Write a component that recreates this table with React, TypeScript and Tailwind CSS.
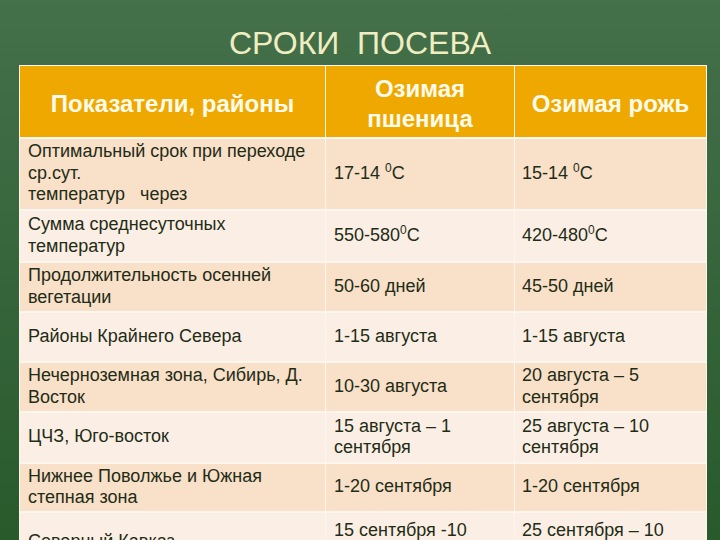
import React from 'react';

type Row = {
  label: React.ReactNode;
  wheat: React.ReactNode;
  rye: React.ReactNode;
  h: string;
  dark: boolean;
};

const deg = <sup className="text-[12px] relative -top-[7px]">0</sup>;

const rows: Row[] = [
  {
    label: (
      <>
        Оптимальный срок при переходе
        <br />
        ср.сут.
        <br />
        <span className="whitespace-pre">температур   через</span>
      </>
    ),
    wheat: <>17-14 {deg}C</>,
    rye: <>15-14 {deg}C</>,
    h: 'h-[72px]',
    dark: true,
  },
  {
    label: (
      <>
        Сумма среднесуточных
        <br />
        температур
      </>
    ),
    wheat: <>550-580{deg}C</>,
    rye: <>420-480{deg}C</>,
    h: 'h-[52px]',
    dark: false,
  },
  {
    label: (
      <>
        Продолжительность осенней
        <br />
        вегетации
      </>
    ),
    wheat: '50-60 дней',
    rye: '45-50 дней',
    h: 'h-[50px]',
    dark: true,
  },
  { label: 'Районы Крайнего Севера', wheat: '1-15 августа', rye: '1-15 августа', h: 'h-[50px]', dark: false },
  {
    label: (
      <>
        Нечерноземная зона, Сибирь, Д.
        <br />
        Восток
      </>
    ),
    wheat: '10-30 августа',
    rye: (
      <>
        20 августа – 5
        <br />
        сентября
      </>
    ),
    h: 'h-[50px]',
    dark: true,
  },
  {
    label: 'ЦЧЗ, Юго-восток',
    wheat: (
      <>
        15 августа – 1
        <br />
        сентября
      </>
    ),
    rye: (
      <>
        25 августа – 10
        <br />
        сентября
      </>
    ),
    h: 'h-[51px]',
    dark: false,
  },
  {
    label: (
      <>
        Нижнее Поволжье и Южная
        <br />
        степная зона
      </>
    ),
    wheat: '1-20 сентября',
    rye: '1-20 сентября',
    h: 'h-[49px]',
    dark: true,
  },
  {
    label: 'Северный Кавказ',
    wheat: (
      <>
        15 сентября -10
        <br />
        октября
      </>
    ),
    rye: (
      <>
        25 сентября – 10
        <br />
        октября
      </>
    ),
    h: 'h-[60px]',
    dark: false,
  },
];

export default function App() {
  return (
    <div className="w-[720px] h-[540px] overflow-hidden bg-gradient-to-b from-[#44704a] to-[#285a2c] font-['Liberation_Sans',Arial,sans-serif]">
      <div className="h-[65px] pt-[25px] text-center text-[32px] leading-[36px] text-[#f1edc2] whitespace-pre">
        СРОКИ  ПОСЕВА
      </div>
      <table className="ml-[19px] w-[687px] border-collapse table-fixed">
        <colgroup>
          <col className="w-[306px]" />
          <col className="w-[189px]" />
          <col className="w-[192px]" />
        </colgroup>
        <thead>
          <tr className="h-[72px] bg-[#efa800] text-[#fffbea] text-[24px] leading-[30px]">
            <th className="border border-[#fff8e8] px-2 pt-[5px] text-center font-bold">Показатели, районы</th>
            <th className="border border-[#fff8e8] px-2 pt-[5px] text-center font-bold">
              Озимая
              <br />
              пшеница
            </th>
            <th className="border border-[#fff8e8] px-2 pt-[5px] text-center font-bold">Озимая рожь</th>
          </tr>
        </thead>
        <tbody className="text-[18px] leading-[21.5px] text-[#1f2c16]">
          {rows.map((r, i) => (
            <tr key={i} className={`${r.h} ${r.dark ? 'bg-[#f8e0c9]' : 'bg-[#fbefe5]'}`}>
              <td className="border-x border-[#fdf6ee] border-y-2 px-2 align-middle">{r.label}</td>
              <td className="border-x border-[#fdf6ee] border-y-2 px-2 align-middle">{r.wheat}</td>
              <td className="border-x border-[#fdf6ee] border-y-2 px-[7px] align-middle">{r.rye}</td>
            </tr>
          ))}
        </tbody>
      </table>
    </div>
  );
}
